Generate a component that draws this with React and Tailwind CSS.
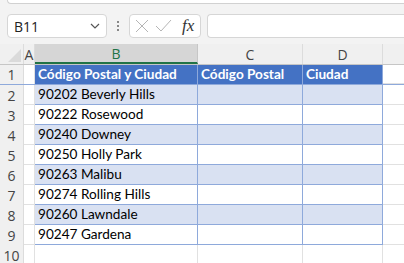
import React from "react";

const rows = [
  "90202 Beverly Hills",
  "90222 Rosewood",
  "90240 Downey",
  "90250 Holly Park",
  "90263 Malibu",
  "90274 Rolling Hills",
  "90260 Lawndale",
  "90247 Gardena",
];

const cell = "h-full shrink-0 border-r border-[#e1e1e1]";
const calibri = { fontFamily: "Lato, 'Liberation Sans', sans-serif" };

const App = () => {
  return (
    <div className="w-[404px] h-[263px] overflow-hidden bg-[#f3f3f3] flex flex-col text-[#262626]" style={{ fontFamily: "'Open Sans', 'Liberation Sans', sans-serif" }}>
      {/* barra superior */}
      <div className="h-[14px] shrink-0 pl-[7px]">
        <div className="h-[4px] bg-white border-b border-l border-[#d1d1d1] rounded-bl-[5px]"></div>
      </div>

      {/* barra de fórmulas */}
      <div className="h-[24px] shrink-0 flex items-center pl-[7px]">
        <div className="w-[100px] h-full bg-white border border-[#d6d6d6] rounded-[4px] flex items-center pl-[6px] pr-[5px] justify-between">
          <span className="text-[14px] text-[#222]">B11</span>
          <svg width="12" height="12" viewBox="0 0 12 12" fill="none" stroke="#555" strokeWidth="1.2">
            <path d="M2 4 L6 8 L10 4" />
          </svg>
        </div>
        <div className="w-[22px] h-full flex flex-col items-center justify-center gap-[2px]">
          <div className="w-[2px] h-[2px] bg-[#888]"></div>
          <div className="w-[2px] h-[2px] bg-[#888]"></div>
          <div className="w-[2px] h-[2px] bg-[#888]"></div>
        </div>
        <div className="w-[72px] h-full bg-white border border-[#d6d6d6] rounded-[4px] flex items-center pl-[5px] gap-[6px]">
          <svg width="14" height="14" viewBox="0 0 14 14" fill="none" stroke="#b5b5b5" strokeWidth="1">
            <path d="M1 1 L13 13 M13 1 L1 13" />
          </svg>
          <svg width="17" height="14" viewBox="0 0 17 14" fill="none" stroke="#b5b5b5" strokeWidth="1">
            <path d="M1 7 L6 12 L16 1" />
          </svg>
          <span className="ml-[4px] text-[17px] italic text-[#333]" style={{ fontFamily: "'Liberation Serif', serif" }}>fx</span>
        </div>
        <div className="ml-[6px] flex-1 h-full bg-white border border-[#d6d6d6] rounded-l-[4px] border-r-0"></div>
      </div>

      <div className="h-[6px] shrink-0"></div>

      {/* encabezados de columna */}
      <div className="h-[21px] shrink-0 flex border-b border-[#c6c6c6] text-[14px] text-[#444] bg-[#f0f0f0]">
        <div className="w-[24px] shrink-0 h-full border-r border-[#dcdcdc] relative">
          <svg className="absolute right-[2px] bottom-[2px]" width="13" height="13" viewBox="0 0 13 13">
            <path d="M13 0 L13 13 L0 13 Z" fill="#dadada" />
          </svg>
        </div>
        <div className="w-[11px] shrink-0 h-full border-r border-[#dcdcdc] flex items-center justify-center">A</div>
        <div className="w-[163px] shrink-0 h-full bg-[#d6d6d6] border-r border-[#c6c6c6] border-b-2 border-b-[#217346] text-[#217346] flex items-center justify-center">B</div>
        <div className="w-[105px] shrink-0 h-full border-r border-[#dcdcdc] flex items-center justify-center">C</div>
        <div className="w-[80px] shrink-0 h-full border-r border-[#dcdcdc] flex items-center justify-center">D</div>
        <div className="flex-1"></div>
      </div>

      {/* fila 1: encabezado de tabla */}
      <div className="h-[20px] shrink-0 flex border-b border-[#8ea9db] text-[13.6px]">
        <div className="w-[24px] shrink-0 h-full bg-[#f0f0f0] border-r border-[#dcdcdc] flex items-center justify-center text-[#444] text-[14px]">1</div>
        <div className={`w-[11px] bg-white ${cell}`}></div>
        <div className="w-[163px] shrink-0 h-full bg-[#4472c4] border-r border-[#8ea9db] text-white font-bold pl-[3px] flex items-center whitespace-nowrap" style={calibri}>Código Postal y Ciudad</div>
        <div className="w-[105px] shrink-0 h-full bg-[#4472c4] border-r border-[#8ea9db] text-white font-bold pl-[3px] flex items-center whitespace-nowrap" style={calibri}>Código Postal</div>
        <div className="w-[80px] shrink-0 h-full bg-[#4472c4] border-r border-[#8ea9db] text-white font-bold pl-[3px] flex items-center whitespace-nowrap" style={calibri}>Ciudad</div>
        <div className="flex-1 bg-white border-b border-[#e1e1e1]"></div>
      </div>

      {rows.map((r, i) => {
        const band = i % 2 === 0 ? "bg-[#d9e1f2]" : "bg-white";
        return (
          <div key={r} className="h-[20px] shrink-0 flex text-[13.6px]">
            <div className="w-[24px] shrink-0 h-full bg-[#f0f0f0] border-r border-[#dcdcdc] flex items-center justify-center text-[#444] text-[14px]">{i + 2}</div>
            <div className={`w-[11px] bg-white border-b border-[#e1e1e1] ${cell}`}></div>
            <div className={`w-[163px] shrink-0 h-full ${band} border-r border-b border-[#8ea9db] pl-[3px] flex items-center whitespace-nowrap text-black`} style={calibri}>{r}</div>
            <div className={`w-[105px] shrink-0 h-full ${band} border-r border-b border-[#8ea9db]`}></div>
            <div className={`w-[80px] shrink-0 h-full ${band} border-r border-b border-[#8ea9db]`}></div>
            <div className="flex-1 bg-white border-b border-[#e1e1e1]"></div>
          </div>
        );
      })}

      <div className="h-[20px] shrink-0 flex">
        <div className="w-[24px] shrink-0 h-full bg-[#f0f0f0] border-r border-[#dcdcdc] flex items-center justify-center text-[#444] text-[14px]">10</div>
        <div className={`w-[11px] bg-white ${cell}`}></div>
        <div className={`w-[163px] bg-white ${cell}`}></div>
        <div className={`w-[105px] bg-white ${cell}`}></div>
        <div className={`w-[80px] bg-white ${cell}`}></div>
        <div className="flex-1 bg-white"></div>
      </div>
    </div>
  );
};

export default App;
